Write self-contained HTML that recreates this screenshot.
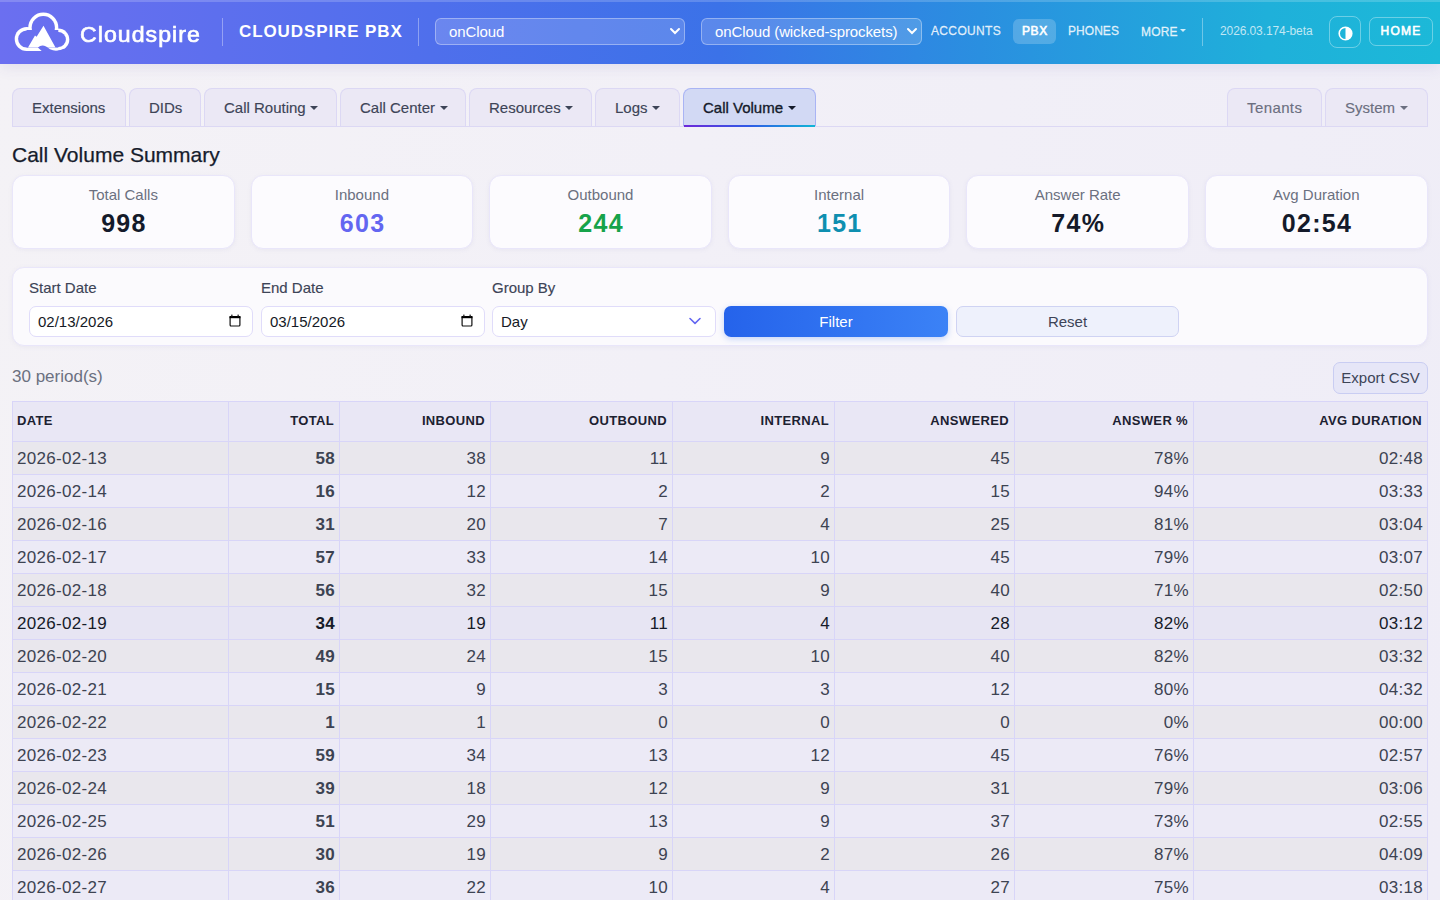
<!DOCTYPE html>
<html><head><meta charset="utf-8">
<style>
*{box-sizing:border-box;margin:0;padding:0}
html,body{width:1440px;height:900px;overflow:hidden}
body{font-family:"Liberation Sans",sans-serif;background:linear-gradient(100deg,#f4f2f6 0%,#f2f0f7 45%,#efedf7 100%);color:#1f2937;position:relative}
.abs{position:absolute}
/* header */
#hdr{position:absolute;left:0;top:0;width:1440px;height:64px;
 background:linear-gradient(90deg,#6b6ff0 0%,#4f6fec 30%,#3b72e8 50%,#2a8fe0 68%,#1fb0da 88%,#1cb9d8 100%);box-shadow:0 3px 14px rgba(70,60,150,.10);z-index:2}
#hdr .topline{position:absolute;left:0;top:0;width:1440px;height:2px;background:rgba(255,255,255,.18)}
.brand{position:absolute;left:80px;top:22px;font-size:22px;font-weight:normal;color:#fff;letter-spacing:1px;-webkit-text-stroke:.65px #fff;transform:scaleX(1.05);transform-origin:0 0}
.vdiv{position:absolute;top:18px;width:1px;height:28px;background:rgba(255,255,255,.35)}
.pbx{position:absolute;left:239px;top:22px;font-size:17px;font-weight:bold;color:#fff;letter-spacing:.9px}
.sel{position:absolute;top:18px;height:27px;border:1px solid rgba(255,255,255,.35);border-radius:6px;background:rgba(255,255,255,.16);color:#fff;font-size:15px;line-height:25px;padding-left:13px;letter-spacing:-.1px}
.sel svg{position:absolute;right:3px;top:7px}
.nav{position:absolute;top:24px;font-size:12px;font-weight:normal;color:rgba(255,255,255,.8);letter-spacing:.6px;-webkit-text-stroke:.3px rgba(255,255,255,.8)}
.pill{position:absolute;left:1013px;top:19px;width:43px;height:25px;border-radius:6px;background:rgba(255,255,255,.2)}
.ver{position:absolute;left:1220px;top:24px;font-size:12px;letter-spacing:-.1px;color:rgba(255,255,255,.72)}
.tbtn{position:absolute;left:1329px;top:16px;width:32px;height:32px;border:1px solid rgba(255,255,255,.35);border-radius:8px}
.home{position:absolute;left:1369px;top:17px;width:64px;height:29px;border:1px solid rgba(255,255,255,.35);border-radius:7px;color:#fff;font-size:12px;font-weight:normal;-webkit-text-stroke:.6px #fff;letter-spacing:1.2px;text-align:center;line-height:27px}

/* tabs */
.tabline{position:absolute;left:12px;top:126px;width:1416px;height:1px;background:#dcd8f4}
.tab{position:absolute;top:88px;height:38px;border:1px solid #dcd8f4;border-bottom:none;border-radius:8px 8px 0 0;background:#ebe8f5;color:#3d4457;font-size:15px;line-height:38px;padding-left:19px;-webkit-text-stroke:.15px currentColor}
.tab.r{color:#6b6f80}
.caret{display:inline-block;width:0;height:0;border-left:4px solid transparent;border-right:4px solid transparent;border-top:4px solid currentColor;vertical-align:middle;margin-left:4.5px;position:relative;top:-1px}
.tab.act{background:#d2d9f4;border-color:#a9b4f4;color:#141a2a;-webkit-text-stroke:.35px #141a2a}
.tab.act .ul{position:absolute;left:0;right:0;bottom:-1px;height:2px;z-index:1;background:linear-gradient(90deg,#6d28d9,#2f5be6 50%,#10b6d6)}
h2{position:absolute;left:12px;top:143px;font-size:21px;font-weight:normal;color:#161c2c;-webkit-text-stroke:.25px #161c2c}
.card{position:absolute;top:175px;width:222.6px;height:74px;background:#fcfbfe;border:1px solid #e9e6fa;border-radius:12px;box-shadow:0 1px 4px rgba(120,110,180,.08);text-align:center}
.card .lb{position:absolute;left:0;right:0;top:10px;font-size:15px;color:#6b7080}
.card .vl{position:absolute;left:0;right:0;top:32.6px;font-size:25px;font-weight:bold;color:#141a2a;letter-spacing:1.3px;text-indent:1.3px}
.fcard{position:absolute;left:12px;top:266.5px;width:1415.5px;height:79px;background:#fbfafd;border:1px solid #e9e6fa;border-radius:12px;box-shadow:0 1px 5px rgba(120,110,180,.08)}
.flb{position:absolute;top:279px;font-size:15px;color:#3d4457;-webkit-text-stroke:.15px #3d4457}
.inp{position:absolute;top:306px;height:31px;border:1px solid #e0dcfa;border-radius:7px;background:#fff;font-size:15px;color:#151a26;line-height:29px;padding-left:8px}
.btnf{position:absolute;left:724px;top:306px;width:224px;height:31px;border-radius:7px;background:linear-gradient(90deg,#2563eb,#3b82f6);color:#fff;font-size:15px;text-align:center;line-height:31px;box-shadow:0 2px 6px rgba(37,99,235,.25)}
.btnr{position:absolute;left:956px;top:306px;width:223px;height:31px;border-radius:7px;border:1px solid #cfd3f3;background:#eef1fc;color:#3d4457;font-size:15px;text-align:center;line-height:29px}
.per{position:absolute;left:12px;top:367px;font-size:17px;color:#6b7080}
.exp{position:absolute;left:1333px;top:362px;width:95px;height:32px;border-radius:7px;border:1px solid #c9cdf2;background:#e6e6f7;color:#3d4457;font-size:15px;text-align:center;line-height:30px}
table{position:absolute;left:12px;top:401px;border-collapse:collapse;table-layout:fixed;width:1416px}
th,td{border:1px solid #d8d5f8;text-align:right;padding:0 5px 0 4px;white-space:nowrap}
th{height:40px;padding-bottom:2px;background:#e9e7f5;font-size:13px;font-weight:bold;color:#1c2131;letter-spacing:.35px}
td{height:33px;font-size:17px;color:#3d4352;letter-spacing:.3px;padding-top:2px;padding-right:4px}
th.l,td.l{text-align:left}
td.b{font-weight:bold}
tr.o td{background:#e9e7ed}
tr.e td{background:#eceaf6}
tr.h td{background:#e7e5f3;color:#161b29}
</style></head>
<body>
<div id="hdr">
  <div class="topline"></div>
  <svg class="abs" style="left:0;top:0" width="80" height="64" viewBox="0 0 80 64">
    <defs><mask id="lm" maskUnits="userSpaceOnUse" x="0" y="0" width="80" height="64">
      <rect x="0" y="0" width="80" height="64" fill="#fff"/>
      <circle cx="26.7" cy="39" r="8.6" fill="#000"/><circle cx="43.3" cy="27.6" r="11.6" fill="#000"/><circle cx="58.3" cy="39.5" r="7.6" fill="#000"/>
      <rect x="26.7" y="30" width="31.6" height="17.6" fill="#000"/>
    </mask>
    <mask id="nm" maskUnits="userSpaceOnUse" x="0" y="0" width="80" height="64">
      <rect x="0" y="0" width="80" height="64" fill="#fff"/>
      <path d="M37.9 47.4 Q43 42.6 50 49.3 Q56 52.4 64 48.8 L64 60 L44 60 L42.2 51.4 Z" fill="#000"/>
    </mask></defs>
    <g mask="url(#nm)">
    <g mask="url(#lm)" fill="#fff">
      <circle cx="26.7" cy="39" r="12" /><circle cx="43.3" cy="27.6" r="15"/><circle cx="58.3" cy="39.5" r="11"/>
      <rect x="26.7" y="30" width="31.6" height="21"/>
    </g>
    <path d="M28 47.6 L35 35.6 L36.6 36.8 L43.5 25.8 L55.5 47.6 Z" fill="#fff"/>
    </g>
  </svg>
  <div class="brand">Cloudspire</div>
  <div class="vdiv" style="left:222px"></div>
  <div class="pbx">CLOUDSPIRE PBX</div>
  <div class="vdiv" style="left:418px"></div>
  <div class="sel" style="left:435px;width:250px">onCloud<svg width="12" height="10" viewBox="0 0 12 10"><path d="M2 3 L6 7 L10 3" fill="none" stroke="#fff" stroke-width="2" stroke-linecap="round"/></svg></div>
  <div class="sel" style="left:701px;width:221px">onCloud (wicked-sprockets)<svg width="12" height="10" viewBox="0 0 12 10"><path d="M2 3 L6 7 L10 3" fill="none" stroke="#fff" stroke-width="2" stroke-linecap="round"/></svg></div>
  <div class="nav" style="left:931px;letter-spacing:.35px">ACCOUNTS</div>
  <div class="pill"></div>
  <div class="nav" style="left:1022px;color:#fff;letter-spacing:.6px;-webkit-text-stroke:.6px #fff">PBX</div>
  <div class="nav" style="left:1068px;letter-spacing:.05px">PHONES</div>
  <div class="nav" style="left:1141px;top:25px;letter-spacing:.2px">MORE<span class="caret" style="margin-left:2.5px;border-width:3px 3.5px 0 3.5px;top:-2px;-webkit-text-stroke:0"></span></div>
  <div class="vdiv" style="left:1202px"></div>
  <div class="ver">2026.03.174-beta</div>
  <div class="tbtn"><svg class="abs" style="left:8px;top:9px" width="15" height="15" viewBox="0 0 15 15"><circle cx="7.5" cy="7.5" r="6.3" fill="none" stroke="#fff" stroke-width="1.6"/><path d="M7.5 1.2 A6.3 6.3 0 0 1 7.5 13.8 Z" fill="#fff"/></svg></div>
  <div class="home">HOME</div>
</div>

<div class="tabline"></div>
<div class="tab" style="left:12px;width:114px">Extensions</div>
<div class="tab" style="left:129px;width:72px">DIDs</div>
<div class="tab" style="left:204px;width:133px">Call Routing<span class="caret"></span></div>
<div class="tab" style="left:340px;width:126px">Call Center<span class="caret"></span></div>
<div class="tab" style="left:469px;width:123px">Resources<span class="caret"></span></div>
<div class="tab" style="left:595px;width:85px">Logs<span class="caret"></span></div>
<div class="tab act" style="left:683px;width:133px">Call Volume<span class="caret"></span><div class="ul"></div></div>
<div class="tab r" style="left:1227px;width:95px;letter-spacing:.4px">Tenants</div>
<div class="tab r" style="left:1325px;width:103px">System<span class="caret"></span></div>
<h2>Call Volume Summary</h2>
<div class="card" style="left:12px"><div class="lb">Total Calls</div><div class="vl">998</div></div>
<div class="card" style="left:250.6px"><div class="lb">Inbound</div><div class="vl" style="color:#6366f1">603</div></div>
<div class="card" style="left:489.2px"><div class="lb">Outbound</div><div class="vl" style="color:#16a34a">244</div></div>
<div class="card" style="left:727.8px"><div class="lb">Internal</div><div class="vl" style="color:#0e8fb0">151</div></div>
<div class="card" style="left:966.4px"><div class="lb">Answer Rate</div><div class="vl">74%</div></div>
<div class="card" style="left:1205px"><div class="lb">Avg Duration</div><div class="vl">02:54</div></div>
<div class="fcard"></div>
<div class="flb" style="left:29px">Start Date</div>
<div class="flb" style="left:261px">End Date</div>
<div class="flb" style="left:492px">Group By</div>
<div class="inp" style="left:29px;width:224px">02/13/2026<svg class="abs" style="left:199px;top:7px" width="13" height="14" viewBox="0 0 13 14"><rect x="1.1" y="2.6" width="9.8" height="9.4" rx="1" fill="none" stroke="#111" stroke-width="1.2"/><rect x="0.5" y="2" width="11" height="2.2" fill="#000"/><rect x="2.2" y="0.6" width="1.3" height="2" fill="#222"/><rect x="8.5" y="0.6" width="1.3" height="2" fill="#222"/></svg></div>
<div class="inp" style="left:261px;width:224px">03/15/2026<svg class="abs" style="left:199px;top:7px" width="13" height="14" viewBox="0 0 13 14"><rect x="1.1" y="2.6" width="9.8" height="9.4" rx="1" fill="none" stroke="#111" stroke-width="1.2"/><rect x="0.5" y="2" width="11" height="2.2" fill="#000"/><rect x="2.2" y="0.6" width="1.3" height="2" fill="#222"/><rect x="8.5" y="0.6" width="1.3" height="2" fill="#222"/></svg></div>
<div class="inp" style="left:492px;width:224px">Day<svg class="abs" style="left:194px;top:9px" width="16" height="10" viewBox="0 0 16 10"><path d="M3 2.5 L8 7.3 L13 2.5" fill="none" stroke="#6366f1" stroke-width="1.6" stroke-linecap="round" stroke-linejoin="round"/></svg></div>
<div class="btnf">Filter</div>
<div class="btnr">Reset</div>
<div class="per">30 period(s)</div>
<div class="exp">Export CSV</div>
<table>
<colgroup><col style="width:216px"><col style="width:111px"><col style="width:151px"><col style="width:182px"><col style="width:162px"><col style="width:180px"><col style="width:179px"><col style="width:234px"></colgroup>
<thead><tr><th class="l">DATE</th><th>TOTAL</th><th>INBOUND</th><th>OUTBOUND</th><th>INTERNAL</th><th>ANSWERED</th><th>ANSWER %</th><th>AVG DURATION</th></tr></thead>
<tbody>
<tr class="o"><td class="l">2026-02-13</td><td class="b">58</td><td>38</td><td>11</td><td>9</td><td>45</td><td>78%</td><td>02:48</td></tr>
<tr class="e"><td class="l">2026-02-14</td><td class="b">16</td><td>12</td><td>2</td><td>2</td><td>15</td><td>94%</td><td>03:33</td></tr>
<tr class="o"><td class="l">2026-02-16</td><td class="b">31</td><td>20</td><td>7</td><td>4</td><td>25</td><td>81%</td><td>03:04</td></tr>
<tr class="e"><td class="l">2026-02-17</td><td class="b">57</td><td>33</td><td>14</td><td>10</td><td>45</td><td>79%</td><td>03:07</td></tr>
<tr class="o"><td class="l">2026-02-18</td><td class="b">56</td><td>32</td><td>15</td><td>9</td><td>40</td><td>71%</td><td>02:50</td></tr>
<tr class="e h"><td class="l">2026-02-19</td><td class="b">34</td><td>19</td><td>11</td><td>4</td><td>28</td><td>82%</td><td>03:12</td></tr>
<tr class="o"><td class="l">2026-02-20</td><td class="b">49</td><td>24</td><td>15</td><td>10</td><td>40</td><td>82%</td><td>03:32</td></tr>
<tr class="e"><td class="l">2026-02-21</td><td class="b">15</td><td>9</td><td>3</td><td>3</td><td>12</td><td>80%</td><td>04:32</td></tr>
<tr class="o"><td class="l">2026-02-22</td><td class="b">1</td><td>1</td><td>0</td><td>0</td><td>0</td><td>0%</td><td>00:00</td></tr>
<tr class="e"><td class="l">2026-02-23</td><td class="b">59</td><td>34</td><td>13</td><td>12</td><td>45</td><td>76%</td><td>02:57</td></tr>
<tr class="o"><td class="l">2026-02-24</td><td class="b">39</td><td>18</td><td>12</td><td>9</td><td>31</td><td>79%</td><td>03:06</td></tr>
<tr class="e"><td class="l">2026-02-25</td><td class="b">51</td><td>29</td><td>13</td><td>9</td><td>37</td><td>73%</td><td>02:55</td></tr>
<tr class="o"><td class="l">2026-02-26</td><td class="b">30</td><td>19</td><td>9</td><td>2</td><td>26</td><td>87%</td><td>04:09</td></tr>
<tr class="e"><td class="l">2026-02-27</td><td class="b">36</td><td>22</td><td>10</td><td>4</td><td>27</td><td>75%</td><td>03:18</td></tr>
<tr class="o"><td class="l">2026-02-28</td><td class="b">44</td><td>25</td><td>11</td><td>8</td><td>33</td><td>75%</td><td>02:41</td></tr>
</tbody></table>
</body></html>
